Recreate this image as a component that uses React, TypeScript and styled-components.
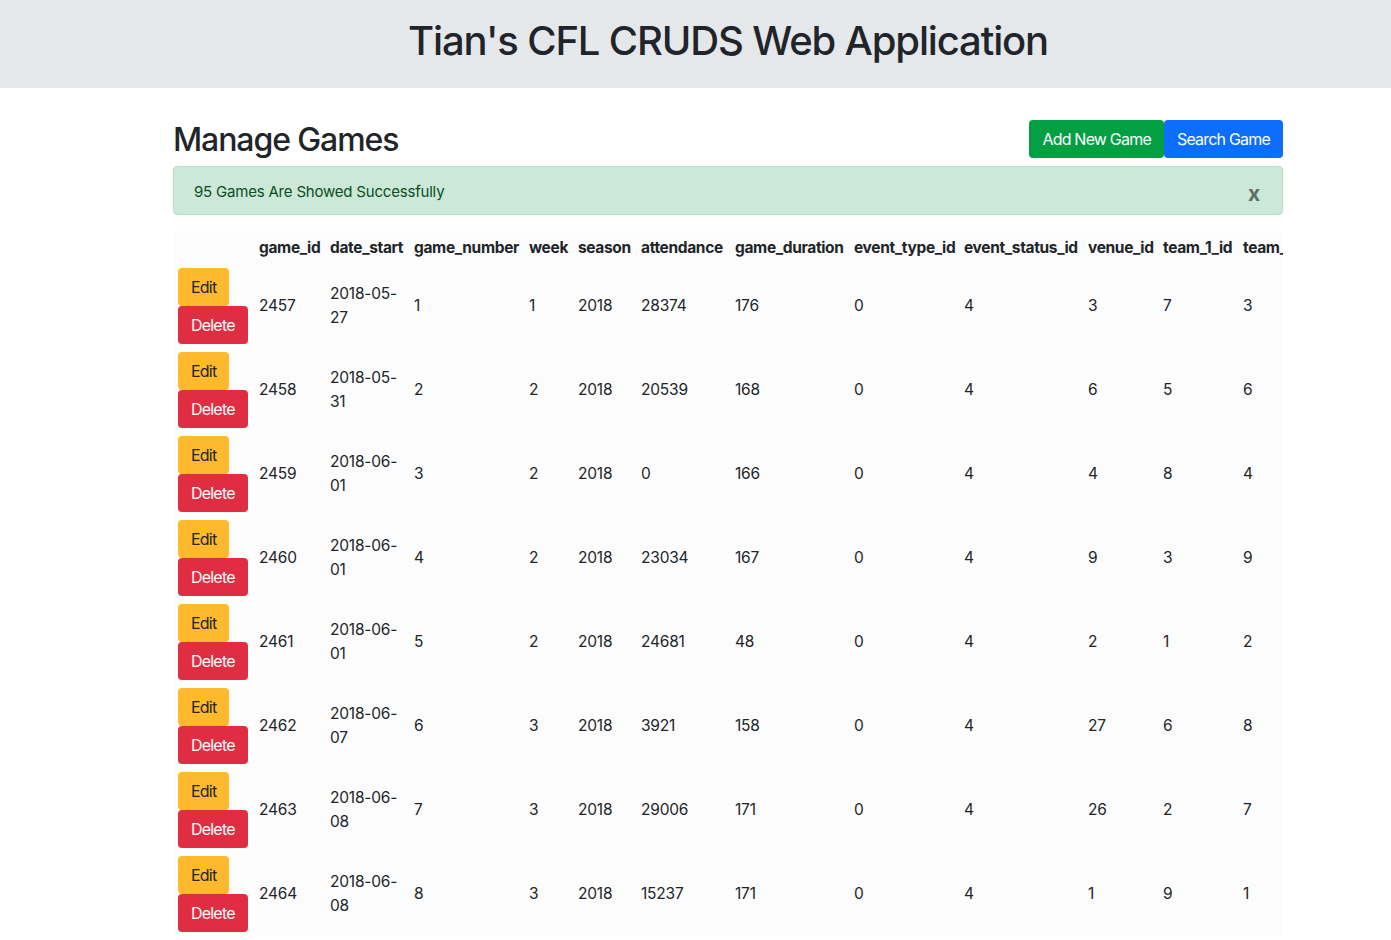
import styled, { createGlobalStyle } from "styled-components";

const GlobalStyle = createGlobalStyle`
  body {
    margin: 0;
    background: #ffffff;
    color: #212529;
    font-family: Inter, "Liberation Sans", sans-serif;
    font-size: 16px;
    line-height: 1.5;
  }
  * { box-sizing: border-box; }
`;

const Header = styled.header`
  background-color: #e5e8eb;
  height: 88px;
  display: flex;
  align-items: center;
`;

const HeaderInner = styled.div`
  width: 1110px;
  margin-left: 173px;
  text-align: center;
  padding-bottom: 6px;
`;

const AppTitle = styled.h1`
  margin: 0;
  font-size: 40px;
  font-weight: 500;
  line-height: 1.2;
  color: #212529;
  letter-spacing: -1.15px;
`;

const Container = styled.main`
  width: 1110px;
  margin-left: 173px;
  padding-top: 32px;
`;

const TopRow = styled.div`
  display: flex;
  justify-content: space-between;
  align-items: center;
  height: 38px;
  margin-bottom: 8px;
`;

const PageTitle = styled.h2`
  margin: 0;
  font-size: 32px;
  font-weight: 500;
  line-height: 1.2;
  letter-spacing: -1.1px;
  padding-top: 2px;
`;

const ButtonGroup = styled.div`
  display: flex;
`;

const Btn = styled.button<{ $variant: "success" | "primary" | "warning" | "danger" }>`
  display: inline-block;
  font-family: inherit;
  font-size: 16px;
  line-height: 24px;
  padding: 6px 12px;
  border: 1px solid transparent;
  border-radius: 4px;
  cursor: pointer;
  letter-spacing: -0.8px;
  background-color: ${(p) =>
    p.$variant === "success"
      ? "#02a043"
      : p.$variant === "primary"
      ? "#0d6efd"
      : p.$variant === "warning"
      ? "#ffb92c"
      : "#e02d42"};
  color: ${(p) => (p.$variant === "warning" ? "#212529" : "#ffffff")};
`;

const Alert = styled.div`
  display: flex;
  justify-content: space-between;
  align-items: center;
  height: 49px;
  padding: 3px 20px 0;
  margin-bottom: 16px;
  background-color: #cce8d6;
  border: 1px solid #b7dfc4;
  border-radius: 4px;
  color: #0b4d25;
  font-size: 15px;
  letter-spacing: -0.2px;
`;

const CloseX = styled.span`
  font-weight: 700;
  font-size: 21px;
  color: #5f6f63;
  line-height: 1;
  margin-right: 2px;
  margin-top: 2px;
`;

const TableWrap = styled.div`
  width: 1110px;
  overflow: hidden;
  background-color: #fcfcfc;
`;

const Table = styled.table`
  border-collapse: collapse;
  table-layout: fixed;
  background-color: #fcfcfc;
`;

const Th = styled.th`
  text-align: left;
  font-weight: 700;
  padding: 5px 5px 4px;
  line-height: 24px;
  white-space: nowrap;
  overflow: hidden;
  letter-spacing: -0.35px;
  font-size: 15.5px;
`;

const Td = styled.td`
  padding: 4px 5px;
  vertical-align: middle;
  font-size: 15.5px;
  line-height: 24px;
  letter-spacing: -0.2px;
  height: 84px;
`;

const ActionCell = styled(Td)`
  line-height: 0;
`;

const columns: { key: string; width: number }[] = [
  { key: "", width: 81 },
  { key: "game_id", width: 71 },
  { key: "date_start", width: 84 },
  { key: "game_number", width: 115 },
  { key: "week", width: 49 },
  { key: "season", width: 63 },
  { key: "attendance", width: 94 },
  { key: "game_duration", width: 119 },
  { key: "event_type_id", width: 110 },
  { key: "event_status_id", width: 124 },
  { key: "venue_id", width: 75 },
  { key: "team_1_id", width: 80 },
  { key: "team_2_id", width: 90 },
];

const games = [
  ["2457", "2018-05-27", "1", "1", "2018", "28374", "176", "0", "4", "3", "7", "3"],
  ["2458", "2018-05-31", "2", "2", "2018", "20539", "168", "0", "4", "6", "5", "6"],
  ["2459", "2018-06-01", "3", "2", "2018", "0", "166", "0", "4", "4", "8", "4"],
  ["2460", "2018-06-01", "4", "2", "2018", "23034", "167", "0", "4", "9", "3", "9"],
  ["2461", "2018-06-01", "5", "2", "2018", "24681", "48", "0", "4", "2", "1", "2"],
  ["2462", "2018-06-07", "6", "3", "2018", "3921", "158", "0", "4", "27", "6", "8"],
  ["2463", "2018-06-08", "7", "3", "2018", "29006", "171", "0", "4", "26", "2", "7"],
  ["2464", "2018-06-08", "8", "3", "2018", "15237", "171", "0", "4", "1", "9", "1"],
];

const tableWidth = columns.reduce((s, c) => s + c.width, 0);

export default function App() {
  return (
    <>
      <GlobalStyle />
      <Header>
        <HeaderInner>
          <AppTitle>Tian's CFL CRUDS Web Application</AppTitle>
        </HeaderInner>
      </Header>
      <Container>
        <TopRow>
          <PageTitle>Manage Games</PageTitle>
          <ButtonGroup>
            <Btn $variant="success">Add New Game</Btn>
            <Btn $variant="primary">Search Game</Btn>
          </ButtonGroup>
        </TopRow>
        <Alert>
          <span>95 Games Are Showed Successfully</span>
          <CloseX>x</CloseX>
        </Alert>
        <TableWrap>
          <Table style={{ width: tableWidth }}>
            <colgroup>
              {columns.map((c, i) => (
                <col key={i} style={{ width: c.width }} />
              ))}
            </colgroup>
            <thead>
              <tr>
                {columns.map((c, i) => (
                  <Th key={i}>{c.key}</Th>
                ))}
              </tr>
            </thead>
            <tbody>
              {games.map((g) => (
                <tr key={g[0]}>
                  <ActionCell>
                    <Btn $variant="warning">Edit</Btn>
                    <Btn $variant="danger">Delete</Btn>
                  </ActionCell>
                  {g.map((v, i) => (
                    <Td key={i}>{v}</Td>
                  ))}
                </tr>
              ))}
            </tbody>
          </Table>
        </TableWrap>
      </Container>
    </>
  );
}
